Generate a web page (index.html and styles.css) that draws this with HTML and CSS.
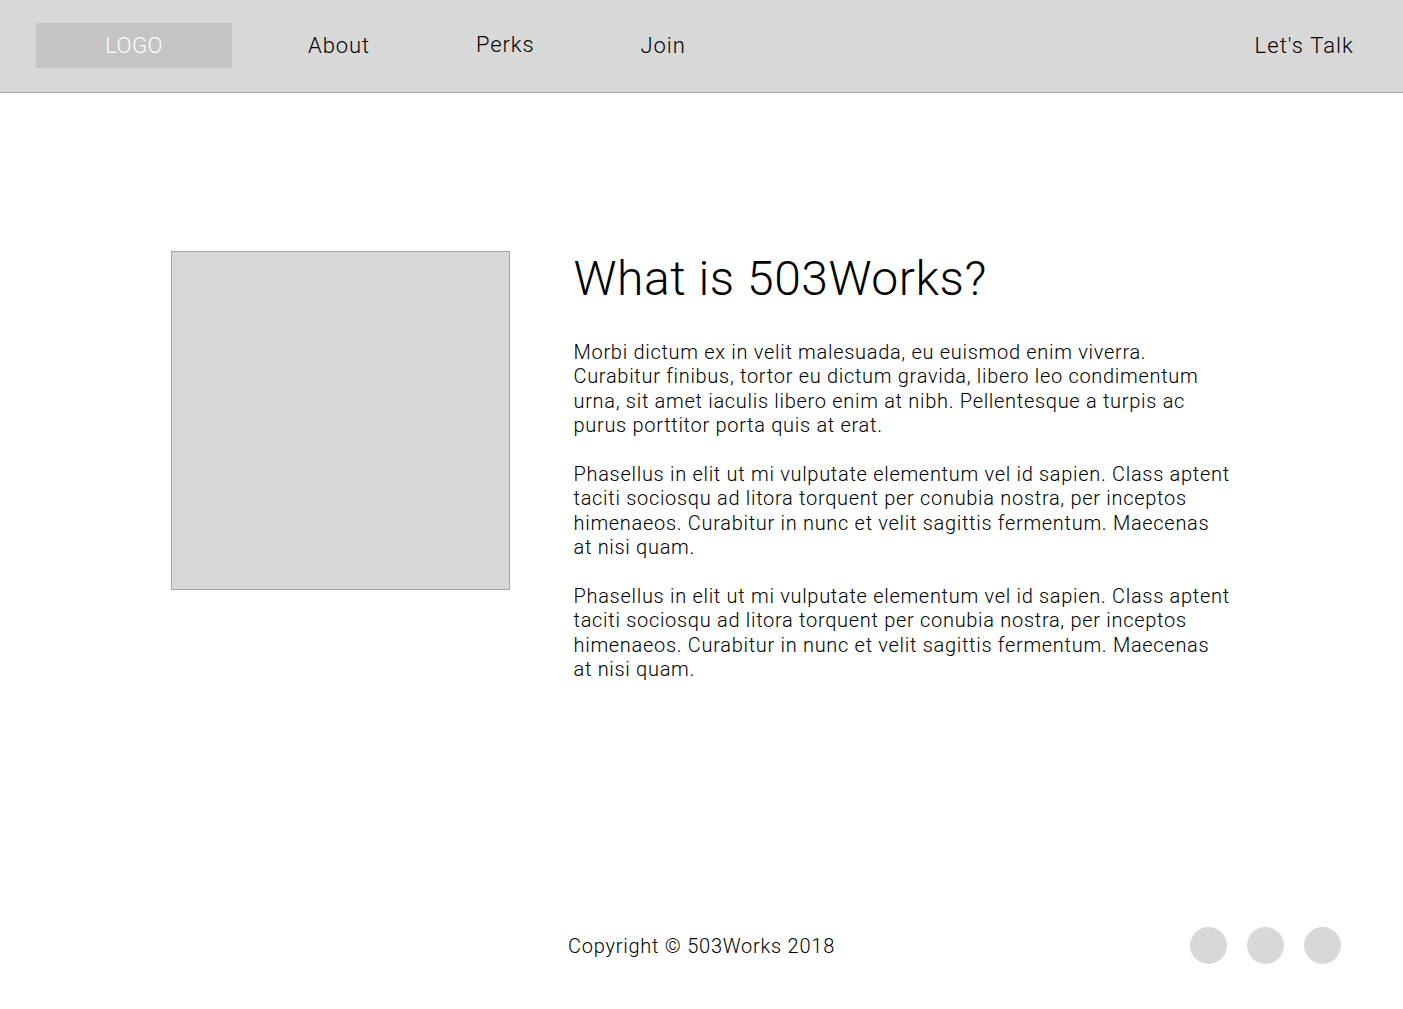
FILE: index.html
```html
<!DOCTYPE html>
<html>
<head>
<meta charset="utf-8">
<link rel="stylesheet" href="styles.css">
</head>
<body>
<header class="topbar">
  <div class="logo">LOGO</div>
  <nav class="nav">
    <a class="nav-about">About</a>
    <a class="nav-perks">Perks</a>
    <a class="nav-join">Join</a>
  </nav>
  <a class="talk">Let's Talk</a>
</header>
<main class="content">
  <div class="picture"></div>
  <section class="text">
    <h1>What is 503Works?</h1>
    <p>Morbi dictum ex in velit malesuada, eu euismod enim viverra. Curabitur finibus, tortor eu dictum gravida, libero leo condimentum urna, sit amet iaculis libero enim at nibh. Pellentesque a turpis ac purus porttitor porta quis at erat.</p>
    <p>Phasellus in elit ut mi vulputate elementum vel id sapien. Class aptent taciti sociosqu ad litora torquent per conubia nostra, per inceptos himenaeos. Curabitur in nunc et velit sagittis fermentum. Maecenas at nisi quam.</p>
    <p>Phasellus in elit ut mi vulputate elementum vel id sapien. Class aptent taciti sociosqu ad litora torquent per conubia nostra, per inceptos himenaeos. Curabitur in nunc et velit sagittis fermentum. Maecenas at nisi quam.</p>
  </section>
</main>
<footer class="footer">
  <div class="copy">Copyright © 503Works 2018</div>
  <div class="social">
    <span class="dot"></span>
    <span class="dot"></span>
    <span class="dot"></span>
  </div>
</footer>
</body>
</html>
```
FILE: styles.css
```css
* { box-sizing: border-box; }
html, body { margin: 0; padding: 0; }
body {
  font-family: Roboto, "Liberation Sans", sans-serif;
  font-weight: 300;
  color: #000;
  background: #fff;
  width: 1403px;
  height: 1009px;
  overflow: hidden;
  display: flex;
  flex-direction: column;
}
.topbar {
  height: 93px;
  flex: none;
  background: #d8d8d8;
  border-bottom: 1px solid #a6a6a6;
  display: flex;
  align-items: center;
  padding: 0 49px 0 36px;
  font-size: 22px;
  letter-spacing: 0.9px;
}
.logo {
  width: 196px;
  height: 45px;
  background: #c4c4c4;
  color: #fff;
  display: flex;
  align-items: center;
  justify-content: center;
  margin-top: -1px;
  letter-spacing: 0.6px;
}
.nav {
  display: flex;
  align-items: center;
  margin-left: 76px;
  margin-top: -2px;
}
.nav a, .talk { color: #000; }
.nav-perks { margin-left: 106px; margin-top: -2px; }
.nav-join { margin-left: 106px; }
.talk { margin-left: auto; margin-top: -2px; letter-spacing: 1.1px; }
.content {
  display: flex;
  align-items: flex-start;
  width: 1062px;
  margin: 158px auto 0;
}
.picture {
  width: 339px;
  height: 339px;
  background: #d8d8d8;
  border: 1px solid #a6a6a6;
  flex: none;
}
.text {
  margin-left: 64px;
  width: 658px;
}
.text h1 {
  font-weight: 300;
  font-size: 48px;
  line-height: 56px;
  letter-spacing: 0.55px;
  margin: 0 0 33px;
}
.text p {
  font-size: 20px;
  line-height: 24.4px;
  letter-spacing: 0.7px;
  margin: 0 0 24.4px;
}
.footer {
  position: relative;
  height: 37px;
  flex: none;
  margin-top: auto;
  margin-bottom: 45px;
  display: flex;
  align-items: center;
  justify-content: center;
}
.copy {
  font-size: 20px;
  letter-spacing: 0.75px;
}
.social {
  position: absolute;
  right: 62px;
  top: 0;
  display: flex;
  gap: 20px;
}
.dot {
  width: 37px;
  height: 37px;
  border-radius: 50%;
  background: #d8d8d8;
}
```
